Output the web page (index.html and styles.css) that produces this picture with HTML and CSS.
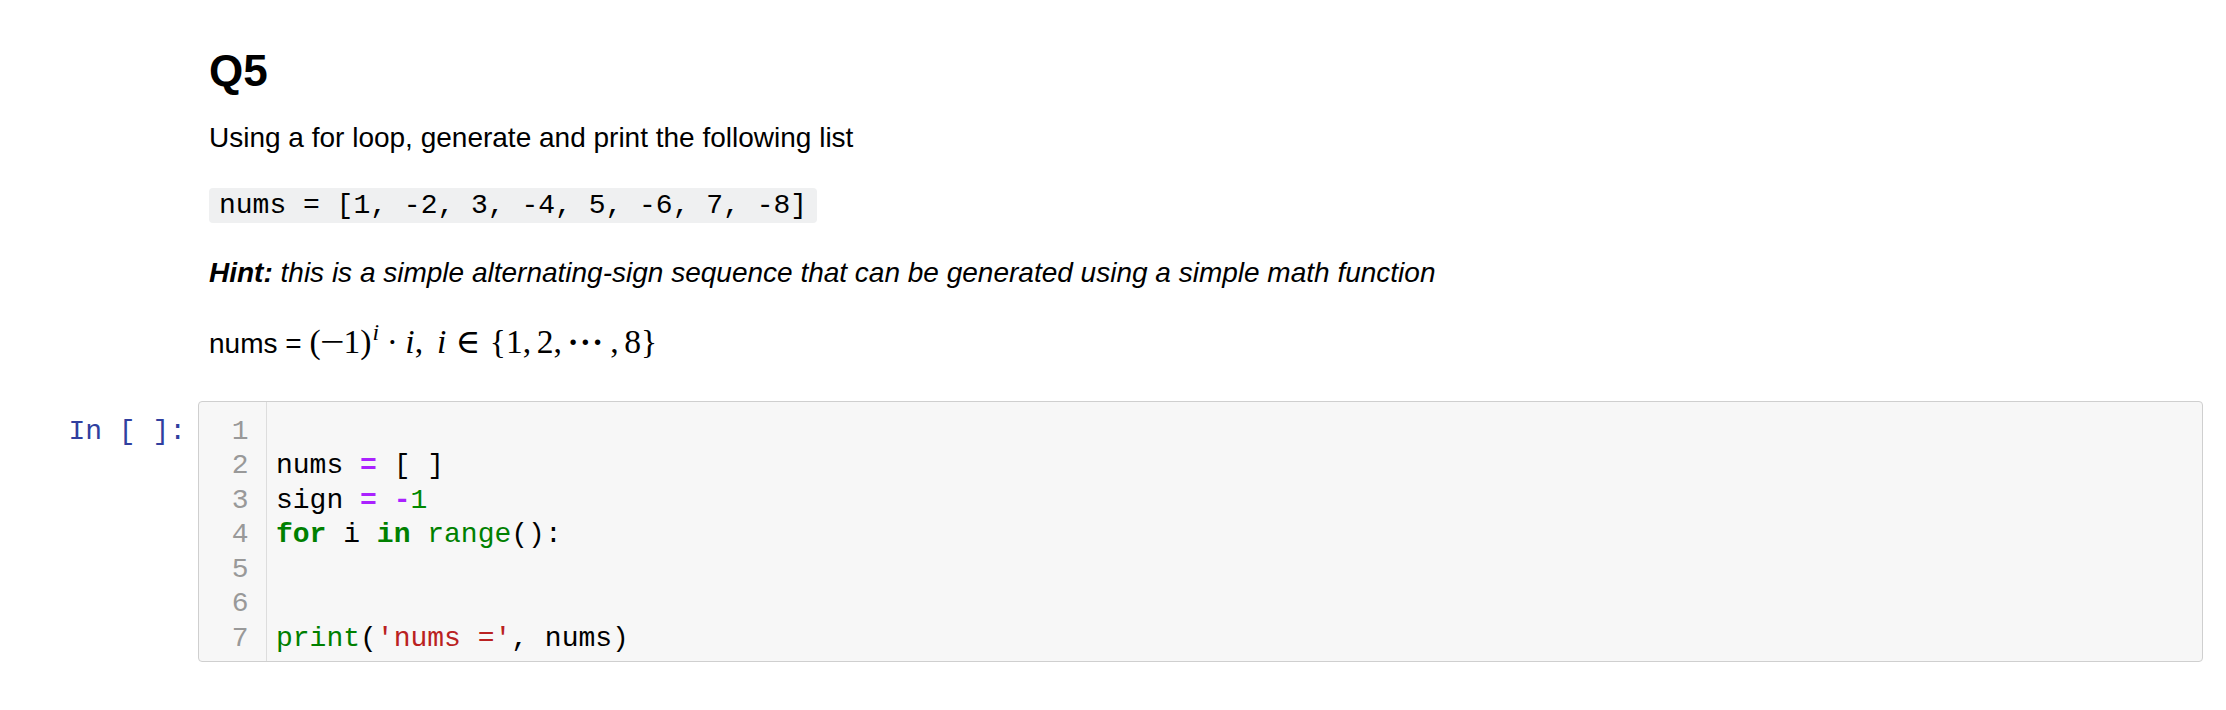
FILE: index.html
```html
<!DOCTYPE html>
<html>
<head>
<meta charset="utf-8">
<link rel="stylesheet" href="styles.css">
</head>
<body>
<div class="notebook">
  <div class="md">
    <h2>Q5</h2>
    <p class="p1">Using a for loop, generate and print the following list</p>
    <p class="p2"><code class="inline">nums = [1, -2, 3, -4, 5, -6, 7, -8]</code></p>
    <p class="p3"><em><strong>Hint:</strong> this is a simple alternating-sign sequence that can be generated using a simple math function</em></p>
    <p class="p4">nums = <span class="math"><span>(</span><span class="minus">−</span>1<span>)</span><span class="mi sup">i</span><span class="bin">·</span><span class="mi">i</span>,<span class="thin"></span><span class="ctrl"></span><span class="mi">i</span><span class="rel">∈</span>{1,<span class="thin"></span>2,<span class="thin"></span><span class="cdots">···</span>,<span class="thin"></span>8}</span></p>
  </div>
  <div class="cell">
    <div class="prompt">In&nbsp;[&nbsp;]:</div>
    <div class="editor">
      <div class="gutter">
        <div>1</div><div>2</div><div>3</div><div>4</div><div>5</div><div>6</div><div>7</div>
      </div>
<pre class="code"><div class="ln"></div><div class="ln">nums <span class="op">=</span> [ ]</div><div class="ln">sign <span class="op">=</span> <span class="op">-</span><span class="num">1</span></div><div class="ln"><span class="kw">for</span> i <span class="kw">in</span> <span class="bi">range</span>():</div><div class="ln"></div><div class="ln"></div><div class="ln"><span class="bi">print</span>(<span class="str">'nums ='</span>, nums)</div></pre>
    </div>
  </div>
</div>
</body>
</html>
```
FILE: styles.css
```css
html, body {
  margin: 0;
  background: #ffffff;
}
body {
  font-family: "Liberation Sans", Arial, sans-serif;
  font-size: 28px;
  color: #000000;
}
.notebook {
  padding-top: 45px;
}
.md {
  padding-left: 209px;
  padding-right: 23px;
}
h2 {
  margin: 0;
  font-size: 44px;
  line-height: 52px;
  font-weight: bold;
}
p {
  margin: 0;
  line-height: 34px;
}
.p1 { margin-top: 24px; }
.p2 { margin-top: 32px; }
.p3 { margin-top: 33px; }
.p4 { margin-top: 37px; }

code.inline {
  font-family: "Liberation Mono", "Courier New", monospace;
  font-size: 28px;
  background: #eff0f1;
  padding: 2px 10px;
  border-radius: 4px;
  color: #000;
}

.math {
  font-family: "Liberation Serif", "DejaVu Serif", serif;
  font-size: 33.6px;
  line-height: 0;
}
.mi { font-style: italic; }
.minus { display: inline-block; transform: scaleX(1.3); margin: 0 2px; }
.sup {
  font-size: 23.8px;
  position: relative;
  top: -13px;
  margin-left: 1px;
}
.bin { margin: 0 7.5px; }
.thin { display: inline-block; width: 5.6px; }
.ctrl { display: inline-block; width: 8.4px; }
.rel { margin: 0 9.3px; }
.cdots { letter-spacing: 1px; margin-right: 6px; font-weight: bold; }

.cell {
  display: flex;
  margin-top: 40px;
  margin-right: 23px;
}
.prompt {
  flex: none;
  width: 186px;
  padding-right: 12px;
  padding-top: 13.5px;
  text-align: right;
  font-family: "Liberation Mono", "Courier New", monospace;
  font-size: 28px;
  line-height: 34.5px;
  color: #303F9F;
}
.editor {
  flex: 1;
  display: flex;
  background: #f7f7f7;
  border: 1px solid #cfcfcf;
  border-radius: 4px;
}
.gutter {
  flex: none;
  width: 49.5px;
  padding: 12.5px 17.5px 5px 0;
  border-right: 1px solid #dddddd;
  text-align: right;
  color: #999999;
  font-family: "Liberation Mono", "Courier New", monospace;
  font-size: 28px;
  line-height: 34.5px;
}
.code {
  flex: 1;
  margin: 0;
  padding: 12.5px 0 5px 9px;
  font-family: "Liberation Mono", "Courier New", monospace;
  font-size: 28px;
  line-height: 34.5px;
  color: #000;
}
.ln { height: 34.5px; }
.op { color: #AA22FF; font-weight: bold; }
.num { color: #008800; }
.kw { color: #008000; font-weight: bold; }
.bi { color: #008000; }
.str { color: #BA2121; }
```
